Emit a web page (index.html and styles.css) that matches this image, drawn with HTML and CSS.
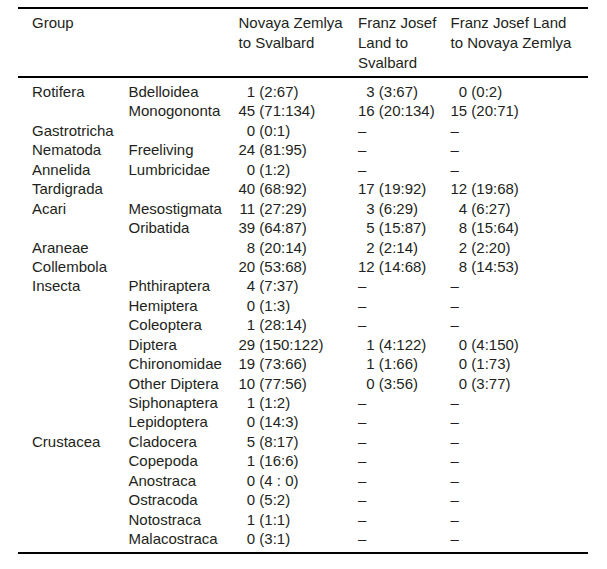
FILE: index.html
```html
<!DOCTYPE html>
<html lang="en">
<head>
<meta charset="utf-8">
<title>Taxa shared between archipelagos</title>
<link rel="stylesheet" href="styles.css">
</head>
<body>
<div class="tbl">
  <div class="head">
    <div>Group</div>
    <div></div>
    <div>Novaya Zemlya<br>to Svalbard</div>
    <div>Franz Josef<br>Land to<br>Svalbard</div>
    <div>Franz Josef Land<br>to Novaya Zemlya</div>
  </div>
  <div class="body">
    <div>Rotifera</div><div>Bdelloidea</div><div><span class="n">1</span> (2:67)</div><div><span class="n">3</span> (3:67)</div><div><span class="n">0</span> (0:2)</div>
    <div></div><div>Monogononta</div><div><span class="n">45</span> (71:134)</div><div><span class="n">16</span> (20:134)</div><div><span class="n">15</span> (20:71)</div>
    <div>Gastrotricha</div><div></div><div><span class="n">0</span> (0:1)</div><div>–</div><div>–</div>
    <div>Nematoda</div><div>Freeliving</div><div><span class="n">24</span> (81:95)</div><div>–</div><div>–</div>
    <div>Annelida</div><div>Lumbricidae</div><div><span class="n">0</span> (1:2)</div><div>–</div><div>–</div>
    <div>Tardigrada</div><div></div><div><span class="n">40</span> (68:92)</div><div><span class="n">17</span> (19:92)</div><div><span class="n">12</span> (19:68)</div>
    <div>Acari</div><div>Mesostigmata</div><div><span class="n">11</span> (27:29)</div><div><span class="n">3</span> (6:29)</div><div><span class="n">4</span> (6:27)</div>
    <div></div><div>Oribatida</div><div><span class="n">39</span> (64:87)</div><div><span class="n">5</span> (15:87)</div><div><span class="n">8</span> (15:64)</div>
    <div>Araneae</div><div></div><div><span class="n">8</span> (20:14)</div><div><span class="n">2</span> (2:14)</div><div><span class="n">2</span> (2:20)</div>
    <div>Collembola</div><div></div><div><span class="n">20</span> (53:68)</div><div><span class="n">12</span> (14:68)</div><div><span class="n">8</span> (14:53)</div>
    <div>Insecta</div><div>Phthiraptera</div><div><span class="n">4</span> (7:37)</div><div>–</div><div>–</div>
    <div></div><div>Hemiptera</div><div><span class="n">0</span> (1:3)</div><div>–</div><div>–</div>
    <div></div><div>Coleoptera</div><div><span class="n">1</span> (28:14)</div><div>–</div><div>–</div>
    <div></div><div>Diptera</div><div><span class="n">29</span> (150:122)</div><div><span class="n">1</span> (4:122)</div><div><span class="n">0</span> (4:150)</div>
    <div></div><div>Chironomidae</div><div><span class="n">19</span> (73:66)</div><div><span class="n">1</span> (1:66)</div><div><span class="n">0</span> (1:73)</div>
    <div></div><div>Other Diptera</div><div><span class="n">10</span> (77:56)</div><div><span class="n">0</span> (3:56)</div><div><span class="n">0</span> (3:77)</div>
    <div></div><div>Siphonaptera</div><div><span class="n">1</span> (1:2)</div><div>–</div><div>–</div>
    <div></div><div>Lepidoptera</div><div><span class="n">0</span> (14:3)</div><div>–</div><div>–</div>
    <div>Crustacea</div><div>Cladocera</div><div><span class="n">5</span> (8:17)</div><div>–</div><div>–</div>
    <div></div><div>Copepoda</div><div><span class="n">1</span> (16:6)</div><div>–</div><div>–</div>
    <div></div><div>Anostraca</div><div><span class="n">0</span> (4 : 0)</div><div>–</div><div>–</div>
    <div></div><div>Ostracoda</div><div><span class="n">0</span> (5:2)</div><div>–</div><div>–</div>
    <div></div><div>Notostraca</div><div><span class="n">1</span> (1:1)</div><div>–</div><div>–</div>
    <div></div><div>Malacostraca</div><div><span class="n">0</span> (3:1)</div><div>–</div><div>–</div>
  </div>
</div>
</body>
</html>
```
FILE: styles.css
```css
html, body {
  margin: 0;
  padding: 0;
  background: #ffffff;
}
body {
  font-family: "Liberation Sans", Arial, sans-serif;
  font-size: 15px;
  color: #231f20;
}
.tbl {
  margin: 7px 0 0 18px;
  width: 570px;
  border-top: 2px solid #000;
  border-bottom: 2px solid #000;
}
.head, .body {
  display: grid;
  grid-template-columns: 96.5px 110px 119.5px 92.5px 1fr;
  padding-left: 14px;
}
.head {
  line-height: 20px;
  padding-top: 4px;
  padding-bottom: 3px;
  border-bottom: 2px solid #000;
}
.body {
  line-height: 19.43px;
  padding-top: 4px;
  padding-bottom: 3.5px;
}
.body > div {
  white-space: nowrap;
}
.n {
  display: inline-block;
  width: 2ch;
  text-align: right;
}
```
